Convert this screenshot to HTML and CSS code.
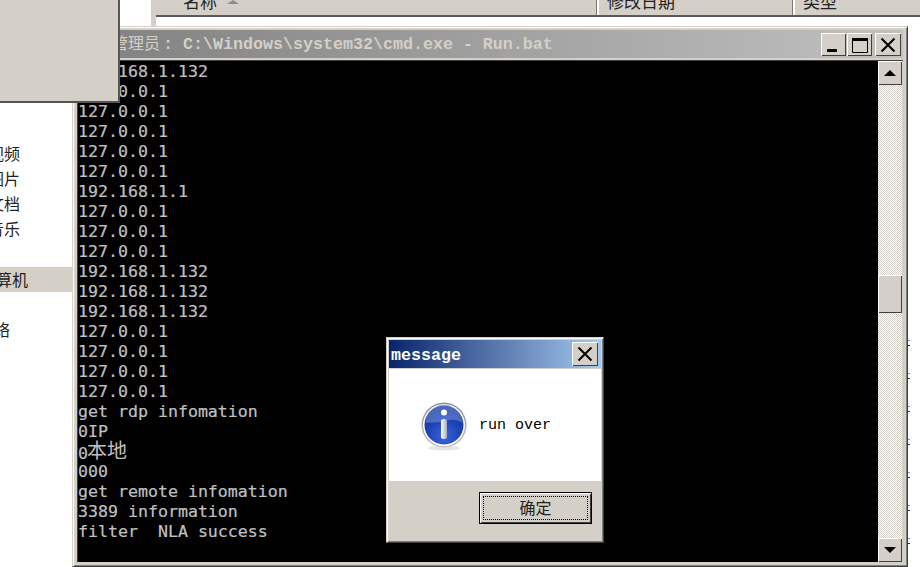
FILE: index.html
```html
<!DOCTYPE html>
<html lang="zh-CN">
<head>
<meta charset="utf-8">
<title>cmd.exe - Run.bat</title>
<link rel="stylesheet" href="styles.css">
</head>
<body>
<div class="desktop">
  <div class="explorer">
    <nav class="sidebar">
      <div class="nav-row indent-a">视频</div>
      <div class="nav-row indent-a">图片</div>
      <div class="nav-row indent-a">文档</div>
      <div class="nav-row indent-a">音乐</div>
      <div class="nav-gap"></div>
      <div class="nav-row indent-b selected">计算机</div>
      <div class="nav-row"></div>
      <div class="nav-row indent-c">网络</div>
    </nav>
    <div class="files">
      <div class="list-header">
        <div class="col col-name">名称<span class="sort-arrow"></span></div>
        <div class="col col-date">修改日期</div>
        <div class="col col-type">类型</div>
      </div>
    </div>
  </div>

  <div class="gray-panel"></div>
  <div class="ticks"></div>

  <section class="console">
    <header class="console-title">
      <span class="console-caption"><span class="caption-cjk">管理员</span>: C:\Windows\system32\cmd.exe - Run.bat</span>
      <button class="cap-btn cap-min"><svg width="25" height="23" viewBox="0 0 25 23"><rect x="6" y="16" width="10" height="3" fill="#000"/></svg></button>
      <button class="cap-btn cap-max"><svg width="25" height="23" viewBox="0 0 25 23"><path d="M5.5 5.5h15v14h-15z" fill="none" stroke="#000"/><rect x="5" y="5" width="16" height="3" fill="#000"/></svg></button>
      <button class="cap-btn cap-close"><svg width="26" height="23" viewBox="0 0 26 23"><path d="M6.5 5.500l13 13M19.500 5.500l-13 13" fill="none" stroke="#000" stroke-width="2"/></svg></button>
    </header>
    <div class="console-body">
      <pre class="console-text"><span class="ln">192.168.1.132</span><span class="ln">127.0.0.1</span><span class="ln">127.0.0.1</span><span class="ln">127.0.0.1</span><span class="ln">127.0.0.1</span><span class="ln">127.0.0.1</span><span class="ln">192.168.1.1</span><span class="ln">127.0.0.1</span><span class="ln">127.0.0.1</span><span class="ln">127.0.0.1</span><span class="ln">192.168.1.132</span><span class="ln">192.168.1.132</span><span class="ln">192.168.1.132</span><span class="ln">127.0.0.1</span><span class="ln">127.0.0.1</span><span class="ln">127.0.0.1</span><span class="ln">127.0.0.1</span><span class="ln">get rdp infomation</span><span class="ln">0IP</span><span class="ln">0<span class="cjk">本地</span></span><span class="ln">000</span><span class="ln">get remote infomation</span><span class="ln">3389 information</span><span class="ln">filter  NLA success</span></pre>
      <div class="scrollbar">
        <div class="sb-btn"><svg width="24" height="23" viewBox="0 0 24 23"><path d="M6 15h12l-6-6z" fill="#000"/></svg></div>
        <div class="sb-track sb-upper"></div>
        <div class="sb-thumb"></div>
        <div class="sb-track sb-lower"></div>
        <div class="sb-btn"><svg width="24" height="23" viewBox="0 0 24 23"><path d="M6 9h12l-6 6z" fill="#000"/></svg></div>
      </div>
    </div>
  </section>

  <section class="dialog">
    <header class="dialog-title">
      <span class="dialog-caption">message</span>
      <button class="cap-btn dialog-close"><svg width="26" height="24" viewBox="0 0 26 24"><path d="M6.500 5.500l13 13M19.500 5.500l-13 13" fill="none" stroke="#000" stroke-width="2"/></svg></button>
    </header>
    <div class="dialog-body">
      <svg class="info-icon" width="48" height="50" viewBox="0 0 48 50">
        <defs>
          <radialGradient id="ball" cx="50%" cy="80%" r="70%">
            <stop offset="0" stop-color="#3a66dc"/>
            <stop offset="0.6" stop-color="#1f42b8"/>
            <stop offset="1" stop-color="#16348f"/>
          </radialGradient>
          <linearGradient id="ring" x1="0" y1="0" x2="0" y2="1">
            <stop offset="0" stop-color="#8f8f8f"/>
            <stop offset="1" stop-color="#c4c4c4"/>
          </linearGradient>
          <linearGradient id="stem" x1="0" y1="0" x2="1" y2="0">
            <stop offset="0" stop-color="#ffffff"/>
            <stop offset="1" stop-color="#a4abbc"/>
          </linearGradient>
        </defs>
        <ellipse cx="24" cy="47" rx="16" ry="2.500" fill="#000" opacity="0.1"/>
        <circle cx="24" cy="24" r="22.500" fill="url(#ring)"/>
        <circle cx="24" cy="24" r="21" fill="#fff"/>
        <circle cx="24" cy="24" r="19.500" fill="url(#ball)"/>
        <path d="M5.500 22a18.500 18.500 0 0 1 37 0c-6-4-12-4-18-2s-13 1-19 2z" fill="#7d9be0" opacity="0.5"/>
        <circle cx="24" cy="11.500" r="3" fill="#fff"/>
        <rect x="21" y="18" width="6" height="20" rx="2.500" fill="url(#stem)"/>
      </svg>
      <span class="dialog-message">run over</span>
    </div>
    <footer class="dialog-foot">
      <button class="ok-btn"><span class="ok-focus">确定</span></button>
    </footer>
  </section>
</div>
</body>
</html>
```
FILE: styles.css
```css
* { box-sizing: border-box; }
html, body { margin: 0; padding: 0; background: #fff; }
body { width: 920px; height: 567px; overflow: hidden; }
button { padding: 0; margin: 0; font: inherit; }
svg { display: block; }

.desktop { position: relative; width: 920px; height: 567px; overflow: hidden; background: #fff; }

/* Explorer behind the console */
.explorer { display: flex; height: 100%; }
.sidebar { width: 73px; flex: none; padding-top: 141px; font: 16px/24px "Noto Sans CJK SC", sans-serif; color: #222; white-space: nowrap; overflow: hidden; }
.nav-row { height: 25px; }
.nav-gap { height: 26px; }
.indent-a { margin-left: -12px; }
.indent-b { margin-left: 0; text-indent: -20px; }
.indent-c { margin-left: -22px; }
.selected { background: #d4d0c8; }

.files { flex: 1; margin-left: 78px; border-left: 5px solid #d4d0c8; height: 26px; }
.list-header { display: flex; height: 17px; background: #d4d0c8; border-bottom: 2px solid #5a5a5a; font: 17px/2px "Noto Sans CJK SC", sans-serif; color: #222; overflow: hidden; }
.col { position: relative; height: 15px; flex: none; border-right: 2px solid #fff; box-shadow: inset -1px 0 0 #777; }
.col-name { width: 443px; padding-left: 27px; }
.col-date { width: 196px; padding-left: 8px; }
.col-type { flex: 1; padding-left: 8px; border-right: 0; box-shadow: none; }
.sort-arrow { position: absolute; left: 71px; top: 0; width: 0; height: 0; border: 6px solid transparent; border-top: 0; border-bottom: 4px solid #8a8a8a; }

.gray-panel { position: absolute; left: 0; top: 0; width: 120px; height: 103px; background: #d4d0c8; border-right: 2px solid #555; border-bottom: 2px solid #555; z-index: 5; }
.ticks { position: absolute; left: 908px; top: 340px; width: 2px; height: 207px; background: repeating-linear-gradient(180deg, #6c9bd0 0 1px, transparent 1px 5px, #1c2f70 5px 6px, transparent 6px 33px); }

/* Console window */
.console { position: absolute; left: 72px; top: 26px; width: 836px; height: 541px; padding: 4px; background: #d4d0c8; display: flex; flex-direction: column; border: 1px solid; border-color: #d4d0c8 #404040 #404040 #d4d0c8; box-shadow: inset 1px 1px 0 #fff, inset -1px -1px 0 #808080; z-index: 2; }
.console-title { display: flex; align-items: center; height: 28px; flex: none; margin-top: -1px; padding: 0 2px 0 35px; gap: 1px; background: linear-gradient(90deg, #808080, #c0c0c0); }
.console-caption { flex: 1; font: bold 16.67px/30px "Liberation Mono", "Noto Sans CJK SC", monospace; color: #d4d0c8; white-space: pre; }
.caption-cjk { font: 16px/28px "Noto Sans CJK SC", sans-serif; margin-right: 3px; }
.cap-btn { flex: none; width: 25px; height: 23px; background: #d4d0c8; border: 0; box-shadow: inset 1px 1px 0 #fff, inset -1px -1px 0 #404040; }
.cap-close { width: 26px; margin-left: 2px; }

.console-body { flex: 1; display: flex; min-height: 0; margin-top: 2px; border-top: 1px solid #404040; border-left: 1px solid #404040; }
.console-text { flex: 1; margin: 0; padding-top: 1px; background: #000; color: #c0c0c0; font: 16.6px/20px "DejaVu Sans Mono", monospace; -webkit-text-stroke: 0.2px #c0c0c0; overflow: hidden; }
.ln { display: block; height: 20px; white-space: pre; }
.cjk { font: 20px/16px "Noto Sans CJK SC", sans-serif; vertical-align: 1px; margin-left: -1px; -webkit-text-stroke: 0; }

.scrollbar { flex: none; width: 25px; display: flex; flex-direction: column; background: #d4d0c8; padding-right: 1px; }
.sb-btn { height: 24px; flex: none; background: #d4d0c8; box-shadow: inset 1px 1px 0 #fff, inset -1px -1px 0 #404040; }
.sb-track { background-color: #fff; background-image: conic-gradient(#d4d0c8 25%, #fff 0 50%, #d4d0c8 0 75%, #fff 0); background-size: 2px 2px; }
.sb-upper { height: 190px; }
.sb-lower { flex: 1; }
.sb-thumb { height: 38px; flex: none; background: #d4d0c8; box-shadow: inset 1px 1px 0 #fff, inset -1px -1px 0 #404040; }

/* Message box */
.dialog { position: absolute; left: 386px; top: 337px; width: 218px; height: 206px; padding: 2px; display: flex; flex-direction: column; background: #d4d0c8; border: 1px solid; border-color: #d4d0c8 #404040 #404040 #d4d0c8; box-shadow: inset 1px 1px 0 #fff, inset -1px -1px 0 #808080; z-index: 6; }
.dialog-title { display: flex; align-items: center; justify-content: space-between; height: 28px; flex: none; padding: 0 3px 0 2px; background: linear-gradient(90deg, #0a246a, #a6caf0); margin-bottom: 1px; }
.dialog-caption { font: bold 16.67px/24px "Liberation Mono", monospace; color: #fff; margin-top: 4px; }
.dialog-close { width: 26px; height: 24px; }
.dialog-body { height: 112px; flex: none; display: flex; align-items: center; padding: 0 0 0 31px; background: #fff; gap: 11px; }
.dialog-message { font: 15px/20px "Liberation Mono", monospace; color: #000; margin-top: 2px; }
.info-icon { margin-top: 2px; }
.dialog-foot { flex: 1; display: flex; justify-content: flex-end; align-items: flex-start; padding: 11px 9px 0 0; background: #d4d0c8; }
.ok-btn { width: 113px; height: 32px; padding: 3px; background: #d4d0c8; border: 1px solid #000; box-shadow: inset 1px 1px 0 #fff, inset -1px -1px 0 #404040; }
.ok-focus { display: block; height: 100%; border: 1px dotted #000; font: 16px/20px "Noto Sans CJK SC", sans-serif; color: #222; text-align: center; }
```
